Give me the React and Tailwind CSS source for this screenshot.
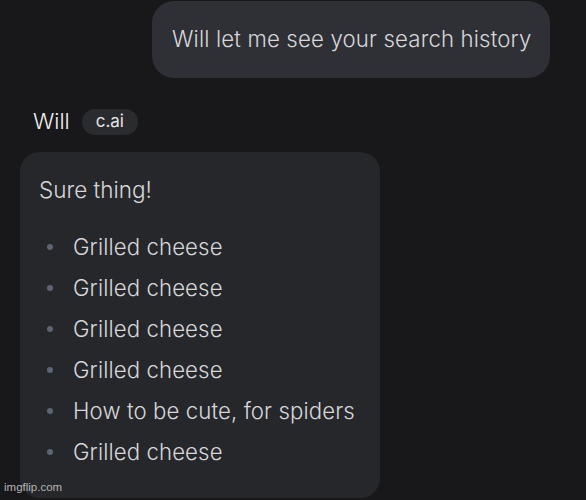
import React from 'react';

const itens = [
  "Grilled cheese",
  "Grilled cheese",
  "Grilled cheese",
  "Grilled cheese",
  "How to be cute, for spiders",
  "Grilled cheese",
];

export default function App() {
  return (
    <div className="relative w-[586px] h-[500px] overflow-hidden bg-[#18181a] font-['Inter',sans-serif] text-[#d7d7da]">
      {/* mensagem do usuário */}
      <div className="flex justify-end pr-[36px] pt-[1px]">
        <div className="flex h-[77px] w-[398px] items-center rounded-[22px] bg-[#2f3035] pl-[20px] pb-[2px] text-[22.2px] font-light tracking-[0.15px]">
          Will let me see your search history
        </div>
      </div>

      {/* nome do bot */}
      <div className="mt-[27px] flex items-center pl-[33px]">
        <span className="text-[22px] font-light text-[#f2f2f2]">Will</span>
        <span className="ml-[12px] flex h-[26px] items-center rounded-full bg-[#2a2b2f] px-[14px] text-[17px] text-[#e6e6e6]">
          c.ai
        </span>
      </div>

      {/* resposta */}
      <div className="ml-[20px] mt-[14px] h-[346px] w-[360px] rounded-[20px] bg-[#26272b] pl-[19px] pt-[17px]">
        <p className="text-[22.5px] font-light leading-[41px]">Sure thing!</p>
        <ul className="mt-[16px]">
          {itens.map((t, i) => (
            <li key={i} className="flex items-center text-[22.2px] font-light leading-[41px] tracking-[0.1px]">
              <span className="ml-[8px] mr-[20px] h-[6px] w-[6px] rounded-full bg-[#5d6572]" />
              {t}
            </li>
          ))}
        </ul>
      </div>

      <span className="absolute bottom-[4px] left-[4px] font-['Liberation_Sans',sans-serif] text-[11.5px] text-[#b4b4b4]">
        imgflip.com
      </span>
    </div>
  );
}
